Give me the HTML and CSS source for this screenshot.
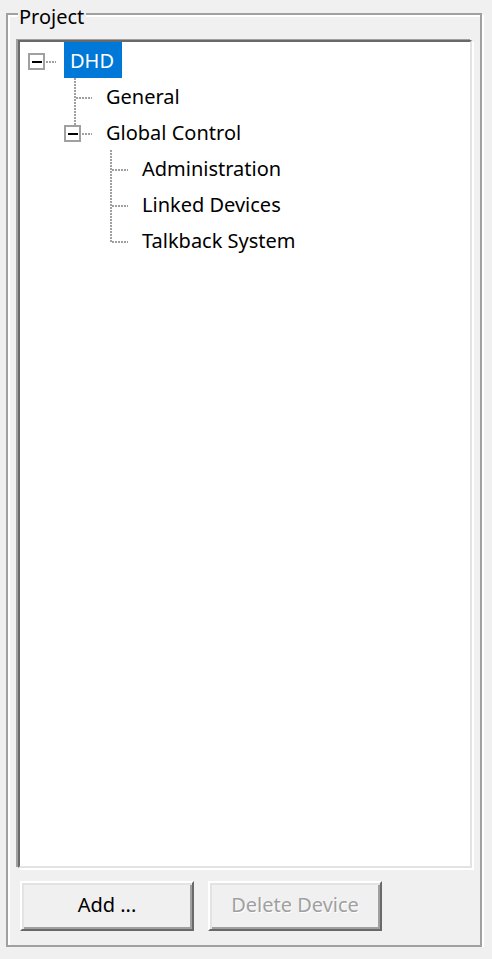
FILE: index.html
```html
<!DOCTYPE html>
<html>
<head>
    <title>Project</title>
    <link rel="stylesheet" href="styles.css">
</head>
<body>
    <fieldset class="group">
        <legend>Project</legend>

        <div class="tree">
            <div class="node">
                <span class="cell branch"><span class="toggle"></span></span>
                <span class="label selected">DHD</span>
            </div>
            <div class="node level-1">
                <span class="cell tee"></span>
                <span class="label">General</span>
            </div>
            <div class="node level-1">
                <span class="cell branch last-branch"><span class="toggle"></span></span>
                <span class="label">Global Control</span>
            </div>
            <div class="node level-2">
                <span class="cell tee"></span>
                <span class="label">Administration</span>
            </div>
            <div class="node level-2">
                <span class="cell tee"></span>
                <span class="label">Linked Devices</span>
            </div>
            <div class="node level-2">
                <span class="cell elbow"></span>
                <span class="label">Talkback System</span>
            </div>
        </div>

        <div class="button-row">
            <button type="button" class="btn">Add ...</button>
            <button type="button" class="btn" disabled>Delete Device</button>
        </div>
    </fieldset>
</body>
</html>
```

FILE: styles.css
```css
body {
    margin: 0;
    background-color: #f0f0f0;
    font-family: "Noto Sans", sans-serif;
    font-size: 20px;
    color: #000;
}

/* group box with etched frame */
.group {
    margin: 0 10px 0 6px;
    padding: 12px 8px 14px 10px;
    border: 2px solid #a0a0a0;
    box-shadow: 2px 2px 0 #fff, inset 2px 2px 0 #fff;
    min-width: 0;
}
.group legend {
    padding: 5px 2px 0 1px;
    line-height: 23px;
    background: #f0f0f0;
}

/* tree view */
.tree {
    height: 828px;
    box-sizing: border-box;
    background: #fff;
    border: 2px solid;
    border-color: #696969 #e3e3e3 #e3e3e3 #696969;
    box-shadow: -2px -1px 0 #a0a0a0, 2px 2px 0 #fff;
}
.node {
    display: flex;
    height: 36px;
}
.level-1 {
    padding-left: 36px;
}
.level-2 {
    padding-left: 72px;
}
.cell {
    position: relative;
    flex: none;
    width: 36px;
    height: 36px;
}
.cell::before,
.cell::after {
    content: "";
    position: absolute;
}
/* vertical connector */
.tee::before,
.elbow::before,
.last-branch::before {
    left: 18px;
    top: 0;
    width: 2px;
    background: repeating-linear-gradient(to bottom, #a0a0a0 0 2px, transparent 2px 3px);
}
.tee::before {
    bottom: 0;
}
.elbow::before {
    height: 21px;
}
.last-branch::before {
    height: 11px;
}
/* horizontal connector */
.cell::after {
    top: 19px;
    height: 2px;
    right: 0;
    left: 20px;
    background: repeating-linear-gradient(to right, #a0a0a0 0 2px, transparent 2px 3px);
}
.branch::after {
    left: 26px;
}
.toggle {
    position: absolute;
    left: 8px;
    top: 11px;
    width: 17px;
    height: 17px;
    box-sizing: border-box;
    border: 2px solid #a0a0a0;
    background: #fff;
}
.toggle::after {
    content: "";
    position: absolute;
    left: 2px;
    top: 6px;
    width: 10px;
    height: 2px;
    background: #000;
}
.label {
    margin-left: 8px;
    padding: 2px 8px 0 6px;
    line-height: 34px;
    white-space: nowrap;
}
.selected {
    background: #0078d7;
    color: #fff;
}

/* buttons */
.button-row {
    display: flex;
    gap: 14px;
    margin: 13px 0 0 2px;
}
.btn {
    width: 174px;
    height: 50px;
    padding: 0 0 3px;
    font-family: inherit;
    font-size: 20px;
    color: #000;
    background: #f0f0f0;
    border: 2px solid;
    border-color: #fff #696969 #696969 #fff;
    box-shadow: inset 2px 2px 0 #e3e3e3, inset -2px -2px 0 #a0a0a0;
}
.btn:disabled {
    color: #a0a0a0;
    text-shadow: 1px 1px 0 #fff;
}
```
